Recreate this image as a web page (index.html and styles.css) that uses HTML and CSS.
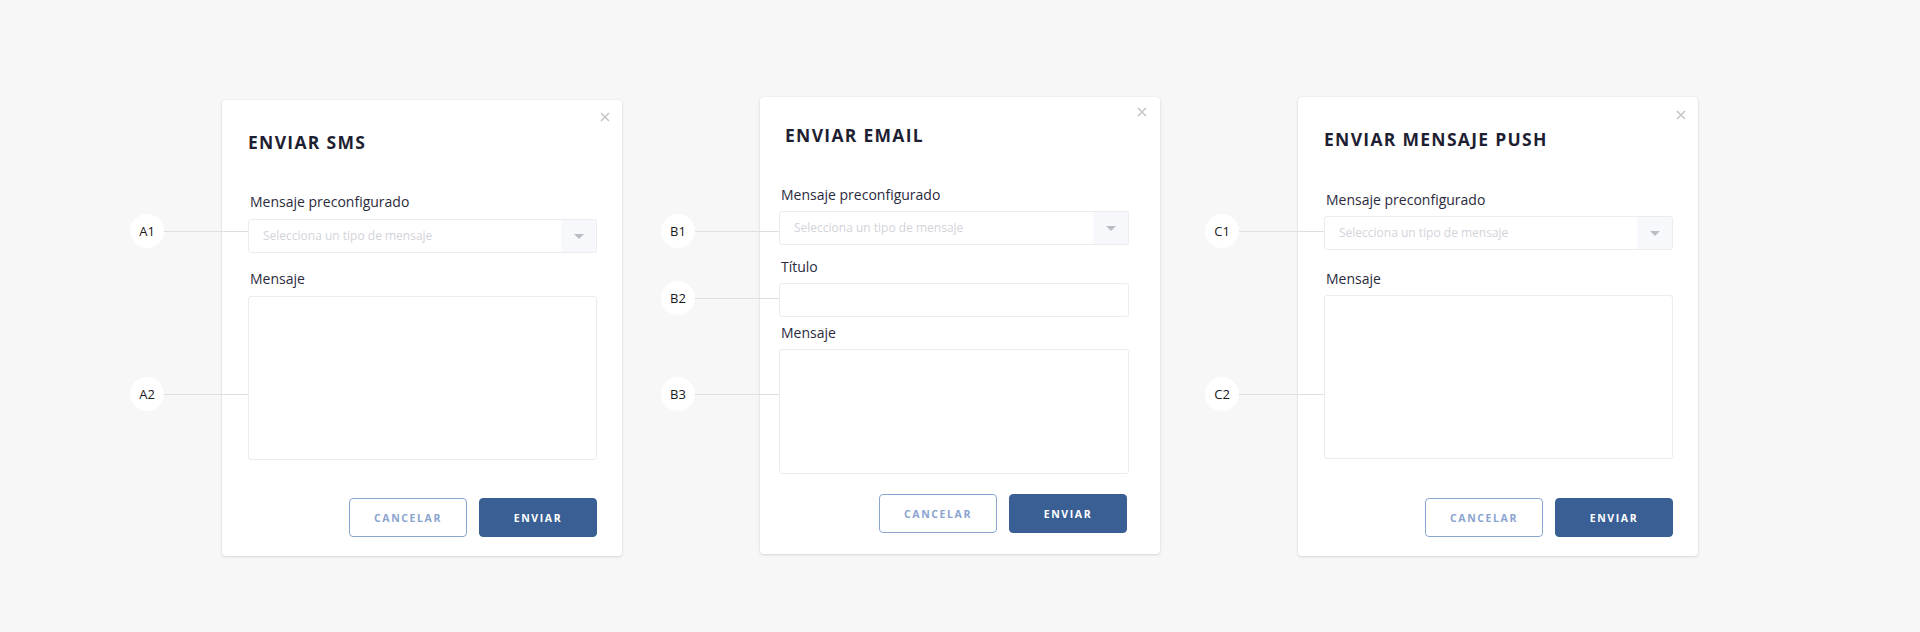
FILE: index.html
```html
<!DOCTYPE html>
<html lang="es">
<head>
  <meta charset="UTF-8">
  <meta name="viewport" content="width=device-width, initial-scale=1.0">
  <title>Enviar mensajes</title>
  <link rel="stylesheet" href="styles.css">
</head>
<body>
  <div class="board">

    <!-- SMS -->
    <div class="modal modal-sms">
      <button class="modal-close"><svg width="10" height="10" viewBox="0 0 10 10"><path d="M1 1L9 9M9 1L1 9"/></svg></button>
      <h2 class="modal-title">ENVIAR SMS</h2>
      <div class="modal-body">
        <div class="field">
          <label class="field-label">Mensaje preconfigurado</label>
          <div class="select">
            <span class="select-value">Selecciona un tipo de mensaje</span>
            <span class="select-arrow"></span>
          </div>
        </div>
        <div class="field">
          <label class="field-label">Mensaje</label>
          <div class="textarea"></div>
        </div>
      </div>
      <div class="modal-footer">
        <button class="btn btn-outline">CANCELAR</button>
        <button class="btn btn-primary">ENVIAR</button>
      </div>
    </div>

    <!-- Email -->
    <div class="modal modal-email">
      <button class="modal-close"><svg width="10" height="10" viewBox="0 0 10 10"><path d="M1 1L9 9M9 1L1 9"/></svg></button>
      <h2 class="modal-title">ENVIAR EMAIL</h2>
      <div class="modal-body">
        <div class="field">
          <label class="field-label">Mensaje preconfigurado</label>
          <div class="select">
            <span class="select-value">Selecciona un tipo de mensaje</span>
            <span class="select-arrow"></span>
          </div>
        </div>
        <div class="field">
          <label class="field-label">Título</label>
          <div class="input"></div>
        </div>
        <div class="field field-message">
          <label class="field-label">Mensaje</label>
          <div class="textarea"></div>
        </div>
      </div>
      <div class="modal-footer">
        <button class="btn btn-outline">CANCELAR</button>
        <button class="btn btn-primary">ENVIAR</button>
      </div>
    </div>

    <!-- Push -->
    <div class="modal modal-push">
      <button class="modal-close"><svg width="10" height="10" viewBox="0 0 10 10"><path d="M1 1L9 9M9 1L1 9"/></svg></button>
      <h2 class="modal-title">ENVIAR MENSAJE PUSH</h2>
      <div class="modal-body">
        <div class="field">
          <label class="field-label">Mensaje preconfigurado</label>
          <div class="select">
            <span class="select-value">Selecciona un tipo de mensaje</span>
            <span class="select-arrow"></span>
          </div>
        </div>
        <div class="field">
          <label class="field-label">Mensaje</label>
          <div class="textarea"></div>
        </div>
      </div>
      <div class="modal-footer">
        <button class="btn btn-outline">CANCELAR</button>
        <button class="btn btn-primary">ENVIAR</button>
      </div>
    </div>

    <!-- anotaciones -->
    <div class="pin pin-a1"><span class="pin-dot">A1</span><span class="pin-line"></span></div>
    <div class="pin pin-a2"><span class="pin-dot">A2</span><span class="pin-line"></span></div>
    <div class="pin pin-b1"><span class="pin-dot">B1</span><span class="pin-line"></span></div>
    <div class="pin pin-b2"><span class="pin-dot">B2</span><span class="pin-line"></span></div>
    <div class="pin pin-b3"><span class="pin-dot">B3</span><span class="pin-line"></span></div>
    <div class="pin pin-c1"><span class="pin-dot">C1</span><span class="pin-line"></span></div>
    <div class="pin pin-c2"><span class="pin-dot">C2</span><span class="pin-line"></span></div>
  </div>
</body>
</html>
```

FILE: styles.css
```css
*{
  margin: 0;
  padding: 0;
  box-sizing: border-box;
}
html,body{
  height: 100%;
}
body{
  background: #f7f7f7;
  font-family: "Open Sans", "Liberation Sans", sans-serif;
  color: #2b2b3d;
}
.board{
  position: relative;
  display: flex;
  justify-content: center;
  align-items: flex-start;
  gap: 138px;
  padding-top: 97px;
  height: 632px;
}

/* modal */
.modal{
  position: relative;
  width: 400px;
  background: #fff;
  border-radius: 4px;
  box-shadow: 0 1px 3px rgba(0,0,0,.12), 0 0 1px rgba(0,0,0,.12);
  padding: 29px 25px 19px 26px;
}
.modal-sms{
  margin-top: 3px;
}
.modal-email{
  padding: 25px 31px 21px 19px;
}
.modal-close{
  position: absolute;
  top: 12px;
  right: 12px;
  width: 10px;
  height: 10px;
  border: 0;
  background: none;
  display: flex;
}
.modal-close path{
  stroke: #c6c6c8;
  stroke-width: 1.6;
  fill: none;
}
.modal-email .modal-close{
  top: 10px;
  right: 13px;
}
.modal-push .modal-close{
  top: 13px;
}
.modal-title{
  font-size: 17.5px;
  line-height: 26px;
  font-weight: 700;
  letter-spacing: 1.3px;
  color: #1f1f33;
}
.modal-email .modal-title{
  padding-left: 6px;
}
.modal-body{
  margin-top: 37px;
}
.modal-push .modal-body{
  margin-top: 38px;
}

/* campos */
.field + .field{
  margin-top: 16px;
}
.modal-push .field + .field{
  margin-top: 19px;
}
.modal-email .field + .field{
  margin-top: 12px;
}
.modal-email .field-message{
  margin-top: 6px !important;
}
.field-label{
  display: block;
  font-size: 14px;
  line-height: 20px;
  padding-left: 2px;
  margin-bottom: 7px;
  color: #2b2b3d;
}
.modal-push .field-label,
.modal-email .field-label{
  margin-bottom: 6px;
}
.select,.input,.textarea{
  border: 1px solid #ebebf0;
  border-radius: 3px;
  background: #fff;
}
.select{
  display: flex;
  height: 34px;
  overflow: hidden;
}
.select-value{
  flex: 1;
  padding-left: 14px;
  font-size: 12px;
  line-height: 32px;
  color: #d3d3da;
}
.select-arrow{
  width: 35px;
  background: #f7f8fb;
  display: flex;
  align-items: center;
  justify-content: center;
}
.select-arrow::after{
  content: "";
  border-left: 5px solid transparent;
  border-right: 5px solid transparent;
  border-top: 5px solid #bcbcc3;
}
.input{
  height: 34px;
}
.textarea{
  height: 164px;
}
.modal-email .textarea{
  height: 125px;
}

/* botones */
.modal-footer{
  display: flex;
  justify-content: flex-end;
  gap: 12px;
  margin-top: 38px;
}
.modal-push .modal-footer{
  margin-top: 39px;
}
.modal-email .modal-footer{
  margin-top: 20px;
  padding-right: 2px;
}
.btn{
  width: 118px;
  height: 39px;
  border-radius: 4px;
  font-family: "Open Sans", "Liberation Sans", sans-serif;
  font-size: 10.5px;
  font-weight: 700;
  letter-spacing: 1.6px;
  cursor: pointer;
}
.btn-outline{
  background: #fff;
  border: 1px solid #8ca6d2;
  color: #8aa4cf;
}
.btn-primary{
  background: #3a5f95;
  border: 1px solid #3a5f95;
  color: #fff;
}

/* anotaciones */
.pin{
  position: absolute;
  display: flex;
  align-items: center;
  height: 34px;
  width: 118px;
}
.pin-dot{
  flex: none;
  width: 34px;
  height: 34px;
  border-radius: 50%;
  background: #fff;
  font-size: 13px;
  line-height: 34px;
  text-align: center;
  color: #1a1a1a;
}
.pin-line{
  flex: 1;
  height: 1px;
  background: #dfdfe2;
}
.pin-a1,.pin-a2{ left: 130px; }
.pin-b1,.pin-b2,.pin-b3{ left: 661px; }
.pin-c1,.pin-c2{ left: 1205px; width: 119px; }
.pin-a1,.pin-b1,.pin-c1{ top: 214px; }
.pin-a2,.pin-b3,.pin-c2{ top: 377px; }
.pin-b2{ top: 281px; }
```
